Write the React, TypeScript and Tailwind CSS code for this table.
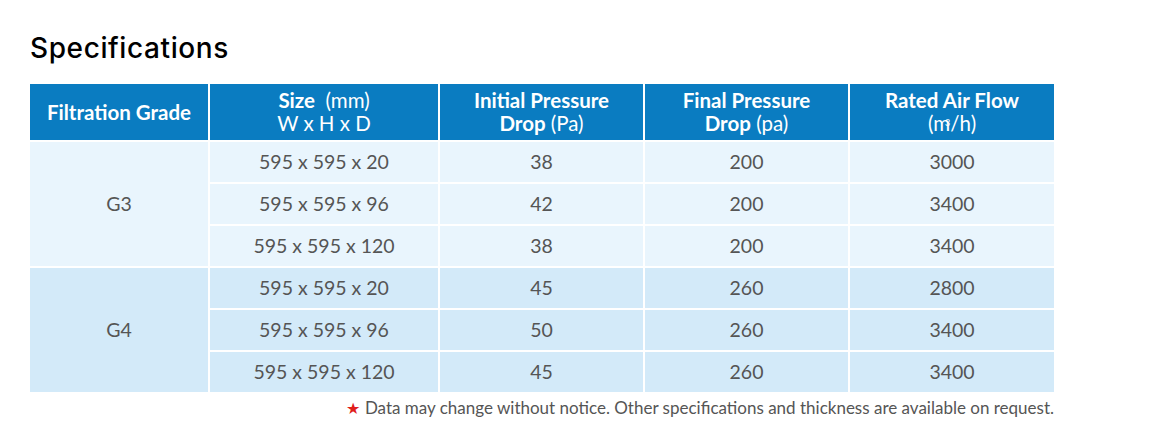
const HEAD = "bg-[#0a7cc1] text-white flex flex-col items-center justify-center leading-[23px] text-[20.5px]";

const GROUPS = [
  {
    grade: "G3",
    bg: "bg-[#e9f5fd]",
    rows: [
      ["595 x 595 x 20", "38", "200", "3000"],
      ["595 x 595 x 96", "42", "200", "3400"],
      ["595 x 595 x 120", "38", "200", "3400"],
    ],
  },
  {
    grade: "G4",
    bg: "bg-[#d3eaf9]",
    rows: [
      ["595 x 595 x 20", "45", "260", "2800"],
      ["595 x 595 x 96", "50", "260", "3400"],
      ["595 x 595 x 120", "45", "260", "3400"],
    ],
  },
];

export default function App() {
  return (
    <div className="w-[1161px] h-[442px] bg-white pl-[30px] pt-[31px] font-['Lato',sans-serif]">
      <h2 className="font-['Inter',sans-serif] font-medium text-[28px] leading-[34px] text-black tracking-[0.6px]">
        Specifications
      </h2>

      <div className="mt-[19px] w-[1024px] grid grid-cols-[178px_228px_203px_203px_204px] grid-rows-[56px_repeat(6,40px)] gap-[2px]">
        <div className={`${HEAD} font-bold`}>Filtration Grade</div>
        <div className={HEAD}>
          <span>
            <b>Size</b>&nbsp; (mm)
          </span>
          <span>W x H x D</span>
        </div>
        <div className={HEAD}>
          <span className="font-bold">Initial Pressure</span>
          <span>
            <b>Drop</b> (Pa)
          </span>
        </div>
        <div className={HEAD}>
          <span className="font-bold">Final Pressure</span>
          <span>
            <b>Drop</b> (pa)
          </span>
        </div>
        <div className={HEAD}>
          <span className="font-bold">Rated Air Flow</span>
          <span>
            (m<sup className="text-[9px] -ml-[5px] relative -top-[5px]">3</sup>/h)
          </span>
        </div>

        {GROUPS.map((g) => (
          <>
            <div
              key={g.grade}
              className={`${g.bg} row-span-3 flex items-center justify-center text-[19.5px] text-[#555]`}
            >
              {g.grade}
            </div>
            {g.rows.map((r) =>
              r.map((cell, i) => (
                <div
                  key={g.grade + r[0] + i}
                  className={`${g.bg} flex items-center justify-center text-[19.5px] text-[#555]`}
                >
                  {cell}
                </div>
              ))
            )}
          </>
        ))}
      </div>

      <p className="w-[1024px] text-right mt-[6px] text-[17px] leading-[20px] text-[#555]">
        <span className="text-[#e0201b] text-[16px] mr-[5px]">★</span>
        Data may change without notice. Other specifications and thickness are available on request.
      </p>
    </div>
  );
}
